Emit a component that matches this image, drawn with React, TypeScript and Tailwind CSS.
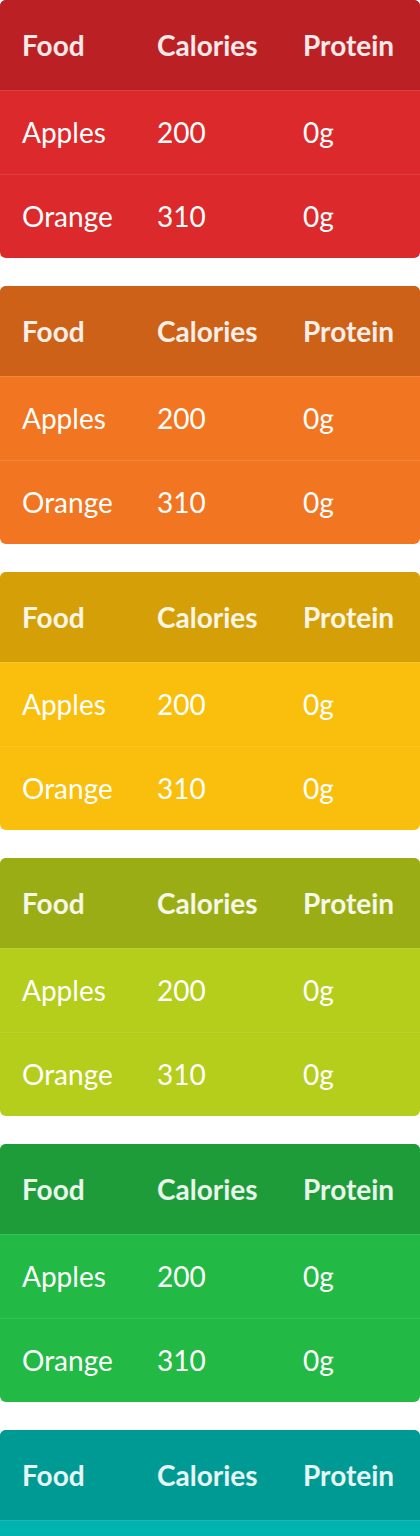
const tables = [
  { head: "bg-[#bb2124]", body: "bg-[#dc2a2c]" },
  { head: "bg-[#cd6118]", body: "bg-[#f27521]" },
  { head: "bg-[#d5a007]", body: "bg-[#fabe0c]" },
  { head: "bg-[#9bad15]", body: "bg-[#b5cd1b]" },
  { head: "bg-[#1f9c3a]", body: "bg-[#22ba45]" },
  { head: "bg-[#009a94]", body: "bg-[#00b3ae]" },
];

const rows = [
  ["Apples", "200", "0g"],
  ["Orange", "310", "0g"],
];

function FoodTable({ head, body }: { head: string; body: string }) {
  return (
    <div className={`shrink-0 rounded-[6px] overflow-hidden ${body}`}>
      <div
        className={`grid grid-cols-[135px_146px_1fr] pl-[22px] h-[90px] items-center text-[28px] font-bold text-white/90 ${head}`}
      >
        <span>Food</span>
        <span>Calories</span>
        <span>Protein</span>
      </div>
      {rows.map((r) => (
        <div
          key={r[0]}
          className="grid grid-cols-[135px_146px_1fr] pl-[22px] h-[84px] pb-px border-t border-white/10 items-center text-[28px] text-white"
        >
          <span>{r[0]}</span>
          <span>{r[1]}</span>
          <span>{r[2]}</span>
        </div>
      ))}
    </div>
  );
}

export default function App() {
  return (
    <div className="w-[420px] h-[1536px] overflow-hidden bg-white flex flex-col gap-[28px] font-['Lato',sans-serif]">
      {tables.map((t, i) => (
        <FoodTable key={i} head={t.head} body={t.body} />
      ))}
    </div>
  );
}
